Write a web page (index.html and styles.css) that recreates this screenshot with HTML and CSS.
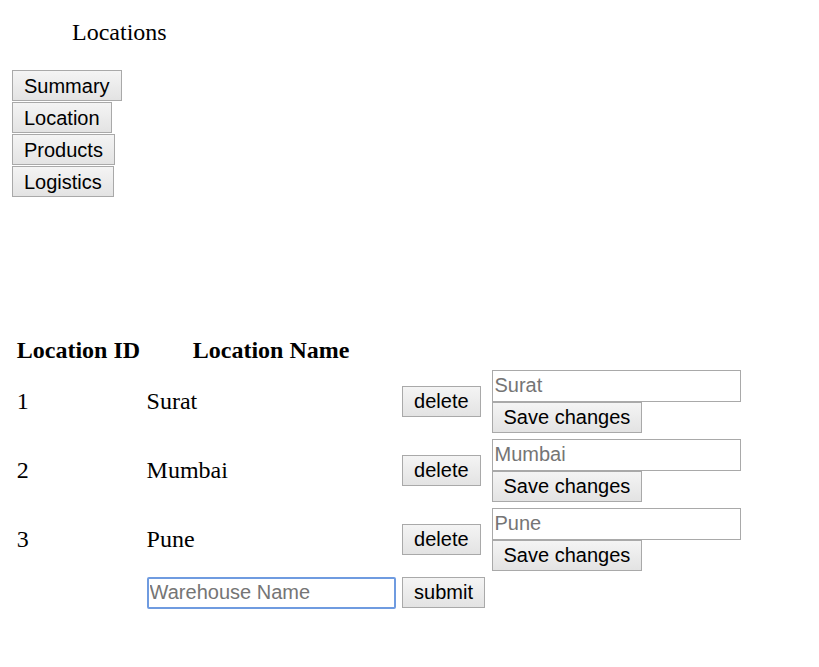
FILE: index.html
```html
<!DOCTYPE html>
<html lang="en">
  <head>
    <meta charset="UTF-8" />
    <meta name="viewport" content="width=device-width, initial-scale=1.0" />
    <title>Locations</title>
    <link rel="stylesheet" href="styles.css">
  </head>
  <body>
    <div class="page-title">Locations</div>

    <div class="side-menu">
      <button class="menu-btn">Summary</button>
      <button class="menu-btn">Location</button>
      <button class="menu-btn">Products</button>
      <button class="menu-btn">Logistics</button>
    </div>

    <table class="location-table">
      <thead>
        <tr>
          <th>Location ID</th>
          <th>Location Name</th>
          <th></th>
          <th></th>
        </tr>
      </thead>
      <tbody id="location-body">
        <tr>
          <td>1</td>
          <td>Surat</td>
          <td><button class="btn">delete</button></td>
          <td>
            <div class="edit-cell">
              <input class="text-input" type="text" placeholder="Surat" />
              <button class="btn">Save changes</button>
            </div>
          </td>
        </tr>
        <tr>
          <td>2</td>
          <td>Mumbai</td>
          <td><button class="btn">delete</button></td>
          <td>
            <div class="edit-cell">
              <input class="text-input" type="text" placeholder="Mumbai" />
              <button class="btn">Save changes</button>
            </div>
          </td>
        </tr>
        <tr>
          <td>3</td>
          <td>Pune</td>
          <td><button class="btn">delete</button></td>
          <td>
            <div class="edit-cell">
              <input class="text-input" type="text" placeholder="Pune" />
              <button class="btn">Save changes</button>
            </div>
          </td>
        </tr>
        <tr>
          <td></td>
          <td><input class="text-input new-input" type="text" placeholder="Warehouse Name" /></td>
          <td><button class="btn">submit</button></td>
          <td></td>
        </tr>
      </tbody>
    </table>
  </body>
</html>
```

FILE: styles.css
```css
body {
  margin: 12px;
  font-family: "Liberation Serif", "Times New Roman", serif;
  font-size: 24px;
  color: #000;
  background-color: #fff;
}

.page-title {
  margin-top: 6px;
  padding-left: 60px;
  line-height: 28px;
}

.side-menu {
  display: flex;
  flex-direction: column;
  align-items: flex-start;
  gap: 1px;
  margin-top: 24px;
}

.menu-btn,
.btn {
  box-sizing: border-box;
  height: 31px;
  margin: 0;
  padding: 0 11px;
  font-family: "Liberation Sans", Arial, sans-serif;
  font-size: 20px;
  color: #000;
  background: linear-gradient(#f4f4f4, #e3e3e3);
  border: 1px solid #a9a9a9;
  border-radius: 0;
  cursor: pointer;
}

.menu-btn {
  padding-top: 1px;
}

.location-table {
  margin-top: 135px;
  border-spacing: 3px;
}

.location-table th {
  padding: 1.5px 1.75px;
  font-weight: bold;
  text-align: center;
  line-height: 27px;
}

.location-table th:first-child {
  text-align: left;
}

.location-table td {
  padding: 1.5px 1.75px;
  vertical-align: middle;
  line-height: 28px;
}

.edit-cell {
  display: flex;
  flex-direction: column;
  align-items: flex-start;
}

.text-input {
  box-sizing: border-box;
  display: block;
  width: 249px;
  height: 32px;
  margin: 0;
  padding: 1px 2px;
  font-family: "Liberation Sans", Arial, sans-serif;
  font-size: 20px;
  color: #000;
  border: 1px solid #a9a9a9;
  border-radius: 0;
  outline: none;
}

.text-input::placeholder {
  color: #757575;
}

.new-input {
  border: 2px solid #6f9be0;
  border-radius: 2px;
  padding: 0 1px;
}
```
